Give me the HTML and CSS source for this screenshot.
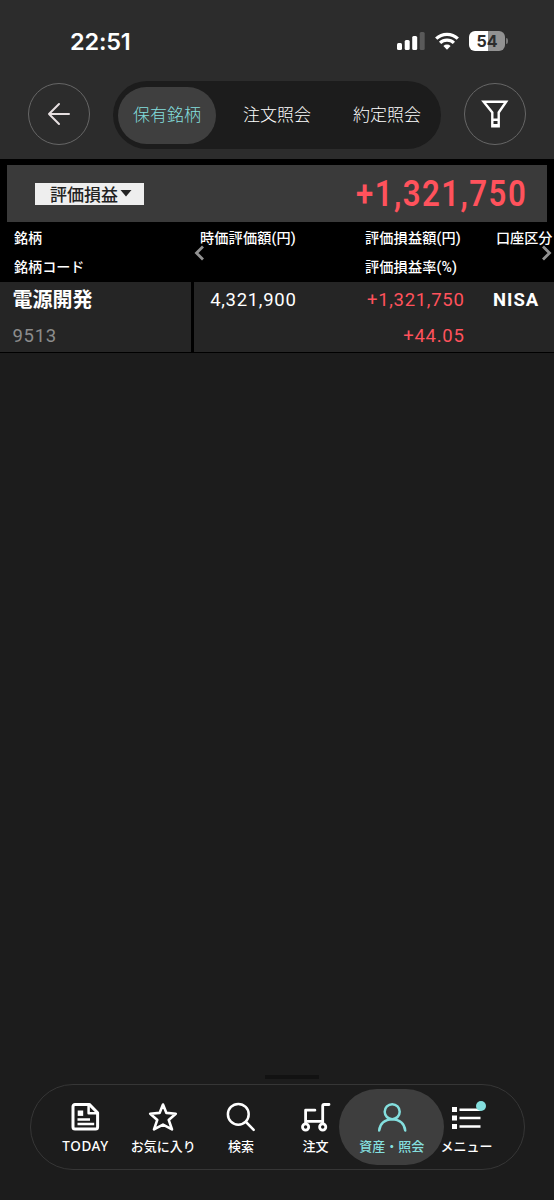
FILE: index.html
```
<!DOCTYPE html>
<html lang="ja">
<head>
    <meta charset="UTF-8">
    <meta name="viewport" content="width=device-width, initial-scale=1.0">
    <title>保有銘柄</title>
    <link rel="stylesheet" href="styles.css">
</head>
<body>

    <!-- Header -->
    <header class="header">
        <div class="status-bar">
            <span class="clock">22:51</span>
            <div class="status-icons">
                <svg class="signal" width="28" height="18" viewBox="0 0 28 18" fill="#fff">
                    <rect x="0" y="11" width="5" height="7" rx="1.5"/>
                    <rect x="7.7" y="8" width="5" height="10" rx="1.5"/>
                    <rect x="15.2" y="4" width="5" height="14" rx="1.5"/>
                    <rect x="22.7" y="0" width="5" height="18" rx="1.5" fill="#5a5a5a"/>
                </svg>
                <svg class="wifi" width="24" height="18" viewBox="0 0 24 18" fill="none" stroke="#fff" stroke-width="3.2">
                    <path d="M1.2 6.7a15.4 15.4 0 0 1 21.6 0"/>
                    <path d="M5.1 10.9a9.8 9.8 0 0 1 13.8 0"/>
                    <path d="M12 17.7l-3.6-3.6a5.1 5.1 0 0 1 7.2 0z" fill="#fff" stroke="none"/>
                </svg>
                <div class="battery">54</div>
            </div>
        </div>

        <div class="top-nav">
            <button class="round-button">
                <svg width="24" height="24" viewBox="0 0 24 24" fill="none" stroke="#e6dfe0" stroke-width="2" stroke-linecap="round" stroke-linejoin="round">
                    <path d="M22 12H2M12 2L2 12l10 10"/>
                </svg>
            </button>
            <div class="tabs">
                <button class="tab active">保有銘柄</button>
                <button class="tab">注文照会</button>
                <button class="tab">約定照会</button>
            </div>
            <button class="round-button">
                <svg width="28" height="28" viewBox="0 0 28 28" fill="none" stroke="#fff" stroke-width="2.4">
                    <path d="M2.6 1.7h22.6l-7.5 10.8v13.8h-6.4V12.5z"/>
                    <path d="M11.3 19.8h6.4M12 25.2h5"/>
                </svg>
            </button>
        </div>
    </header>

    <!-- Profit and loss summary -->
    <section class="summary">
        <button class="summary-select">評価損益<svg width="12" height="7" viewBox="0 0 12 7"><path d="M.5 0h11L6 6.5z" fill="#222"/></svg></button>
        <span class="summary-amount">+1,321,750</span>
    </section>

    <!-- Holdings -->
    <section class="holdings">
        <div class="grid-row grid-head">
            <div class="name"><p>銘柄</p><p>銘柄コード</p></div>
            <div class="value"><p>時価評価額(円)</p></div>
            <div class="profit"><p>評価損益額(円)</p><p>評価損益率(%)</p></div>
            <div class="account"><p>口座区分</p></div>
            <svg class="arrow arrow-left" width="11" height="16" viewBox="0 0 11 16"><path d="M9 1.5L2.5 8 9 14.5"/></svg>
            <svg class="arrow arrow-right" width="11" height="16" viewBox="0 0 11 16"><path d="M2 1.5L8.5 8 2 14.5"/></svg>
        </div>
        <div class="grid-row grid-body">
            <div class="name"><p class="stock">電源開発</p><p class="code">9513</p></div>
            <div class="value"><p>4,321,900</p></div>
            <div class="profit plus"><p>+1,321,750</p><p>+44.05</p></div>
            <div class="account"><p>NISA</p></div>
        </div>
    </section>

    <!-- Bottom menu -->
    <footer class="footer">
        <div class="handle"></div>
        <nav class="menu">
            <a class="menu-item">
                <svg width="30" height="30" viewBox="0 0 30 30" fill="none" stroke="#fff" stroke-width="3" stroke-linejoin="round">
                    <path d="M4 2.4h14.3l8.3 8.3v14.2a2 2 0 0 1-2 2H4a2 2 0 0 1-2-2V4.400a2 2 0 0 1 2-2z"/>
                    <path d="M17.6 2.8v8.4h8.500" stroke-width="2.5"/>
                    <path d="M6.700 8.500h5.500v5.400H6.700z" fill="#fff" stroke="none"/>
                    <path d="M6.500 17.500h12.500M6.500 22h16.700" stroke-width="2.300"/>
                </svg>
                <span class="latin">TODAY</span>
            </a>
            <a class="menu-item">
                <svg width="30" height="30" viewBox="0 0 30 30" fill="none" stroke="#fff" stroke-width="2.6" stroke-linejoin="round">
                    <path d="M15 2.5l3.4 8.400 9.400.8-7.100 6.200 3.300 9.500L15 22.600l-9 4.800 3.300-9.500-7.100-6.200 9.400-.8z"/>
                </svg>
                <span>お気に入り</span>
            </a>
            <a class="menu-item">
                <svg width="30" height="30" viewBox="0 0 30 30" fill="none" stroke="#fff" stroke-width="2.5" stroke-linecap="round">
                    <circle cx="12.3" cy="12.3" r="10.4"/>
                    <path d="M20 20l7.700 7.800"/>
                </svg>
                <span>検索</span>
            </a>
            <a class="menu-item">
                <svg width="30" height="30" viewBox="0 0 30 30" fill="none" stroke="#fff" stroke-width="2.8" stroke-linecap="round" stroke-linejoin="round">
                    <circle cx="4.6" cy="25" r="3.1"/>
                    <circle cx="21.700" cy="25" r="3.1"/>
                    <path d="M4.600 21.500V8.200h9.300M4.600 19.400h17.100M21.700 21.500V4a1.500 1.500 0 0 1 1.500-1.500H28"/>
                </svg>
                <span>注文</span>
            </a>
            <a class="menu-item active">
                <svg width="30" height="30" viewBox="0 0 30 30" fill="none" stroke="#84dfde" stroke-width="2.5" stroke-linecap="round">
                    <circle cx="15.2" cy="9.7" r="7.5"/>
                    <path d="M2.2 28.5c.5-6.5 5.5-11.3 13-11.3s12.500 4.800 13 11.300"/>
                </svg>
                <span>資産・照会</span>
            </a>
            <a class="menu-item">
                <svg width="30" height="30" viewBox="0 0 30 30" fill="#fff">
                    <path d="M1 5h5v5H1zM1 13.500h5v5H1zM1 22h5v5H1zM8.500 6.500h21v2.600h-21zM8.500 14.700h21v2.600h-21zM8.500 23.200h21v2.600h-21z"/>
                </svg>
                <i class="badge"></i>
                <span>メニュー</span>
            </a>
        </nav>
    </footer>

</body>
</html>
```
FILE: styles.css
```
* {
    box-sizing: border-box;
}

body {
    margin: 0;
    height: 1200px;
    display: flex;
    flex-direction: column;
    overflow: hidden;
    background-color: #1c1c1c;
    color: #fff;
    font-family: Roboto, "Noto Sans CJK JP", sans-serif;
}

p {
    margin: 0;
}

button {
    padding: 0;
    border: none;
    background: none;
    color: inherit;
    font-family: inherit;
}

/* Header */
.header {
    height: 159px;
    background-color: #2c2c2c;
}

.status-bar {
    height: 83px;
    display: flex;
    justify-content: space-between;
    padding: 27px 46px 0 70px;
}

.clock {
    font-family: Inter, sans-serif;
    font-size: 23.5px;
    font-weight: 600;
    line-height: 30px;
    letter-spacing: -0.2px;
}

.status-icons {
    display: flex;
    align-items: flex-start;
    padding-top: 5px;
}

.wifi {
    margin-left: 10px;
}

.battery {
    position: relative;
    width: 36px;
    height: 20px;
    margin: -1px 3px 0 10px;
    border-radius: 6px;
    background: linear-gradient(to right, #fff 54%, #929292 54%);
    color: #2c2c2c;
    font-family: Inter, sans-serif;
    font-size: 16px;
    font-weight: 700;
    line-height: 20px;
    text-align: center;
}

.battery::after {
    content: "";
    position: absolute;
    right: -3px;
    top: 7px;
    width: 2px;
    height: 6px;
    border-radius: 0 3px 3px 0;
    background-color: #777;
}

.top-nav {
    display: flex;
    align-items: center;
    justify-content: space-between;
    height: 62px;
    padding: 0 28px;
}

.round-button {
    width: 62px;
    height: 62px;
    border: 1px solid #666;
    border-radius: 50%;
    display: flex;
    align-items: center;
    justify-content: center;
}

.tabs {
    display: flex;
    align-items: center;
    gap: 12px;
    width: 328px;
    height: 68px;
    margin-top: 2px;
    padding: 0 5px;
    border-radius: 34px;
    background-color: #1c1c1c;
}

.tab {
    width: 98px;
    height: 57px;
    padding-bottom: 4px;
    border-radius: 29px;
    font-family: "Noto Sans CJK JP", sans-serif;
    font-size: 17px;
    font-weight: 300;
}

.tab.active {
    background-color: #3f3f3f;
    color: #84dfde;
}

/* Profit and loss summary */
.summary {
    display: flex;
    align-items: center;
    justify-content: space-between;
    height: 63px;
    padding: 0 20px 0 28px;
    border: solid #000;
    border-width: 6px 7px 0;
    background-color: #3a3a3a;
}

.summary-select {
    display: flex;
    align-items: center;
    width: 109px;
    height: 22px;
    padding-left: 15px;
    gap: 2px;
    background-color: #eee;
    color: #222;
    font-family: "Noto Sans CJK JP", sans-serif;
    font-size: 17px;
    font-weight: 500;
    line-height: 20px;
}

.summary-amount {
    color: #ff525c;
    font-size: 36.5px;
    font-weight: 600;
    letter-spacing: 1.7px;
    transform: scaleX(0.855);
    transform-origin: right;
}

/* Holdings */
.grid-row {
    position: relative;
    display: grid;
    grid-template-columns: 194px 118px 166px 76px;
}

.grid-head {
    height: 60px;
    padding-top: 2px;
    background-color: #000;
    font-size: 14.1px;
    font-weight: 500;
    line-height: 29px;
    letter-spacing: 0.2px;
    white-space: nowrap;
}

.grid-head .name {
    padding-left: 14px;
    letter-spacing: 0;
}

.grid-head .value {
    padding-left: 6px;
}

.grid-head .profit {
    padding-left: 53px;
}

.grid-head .account {
    padding-left: 18px;
    letter-spacing: 0;
}

.arrow {
    position: absolute;
    top: 23px;
    fill: none;
    stroke: #929292;
    stroke-width: 2.8;
}

.arrow-left {
    left: 194px;
}

.arrow-right {
    right: 2px;
}

.grid-body {
    height: 71px;
    border-bottom: 1px solid #000;
    background-color: #252525;
    font-size: 18.5px;
    line-height: 36px;
    letter-spacing: 0.7px;
}

.grid-body .name {
    height: 70px;
    padding-left: 12.5px;
    border-right: 3px solid #000;
}

.grid-body .value {
    padding-right: 15.5px;
    text-align: right;
}

.grid-body .profit {
    padding-right: 13.5px;
    text-align: right;
}

.grid-body .account {
    padding-left: 15px;
    font-weight: 700;
    letter-spacing: 1px;
}

.stock {
    font-size: 20px;
    font-weight: 700;
    letter-spacing: 0;
}

.code {
    color: #8c8c8c;
}

.plus {
    color: #ff525c;
}

/* Bottom menu */
.footer {
    margin-top: auto;
    height: 125px;
}

.handle {
    width: 54px;
    height: 4px;
    margin: 0 auto 5px 265px;
    background-color: #121212;
}

.menu {
    display: grid;
    grid-template-columns: repeat(6, 76.2px);
    justify-content: center;
    width: 495px;
    height: 86px;
    margin-left: 29.5px;
    border: 1px solid #363636;
    border-radius: 43px;
}

.menu-item {
    position: relative;
    display: flex;
    flex-direction: column;
    align-items: center;
    padding: 17px 0 0 1px;
    font-family: "Noto Sans CJK JP", sans-serif;
    font-size: 13px;
    font-weight: 500;
    line-height: 28px;
    white-space: nowrap;
}

.menu-item:first-child,
.menu-item:last-child {
    padding-left: 0;
    padding-right: 2px;
}

.menu-item:nth-child(3) {
    padding-left: 4px;
}

.latin {
    font-family: "Noto Sans", sans-serif;
    font-size: 13.5px;
    letter-spacing: 0.6px;
}

.menu-item.active {
    color: #84dfde;
}

.menu-item.active::before {
    content: "";
    position: absolute;
    z-index: -1;
    top: 4px;
    left: -14px;
    width: 105px;
    height: 76px;
    border-radius: 38px;
    background-color: #3e3e3e;
}

.badge {
    position: absolute;
    top: 16px;
    right: 19.5px;
    width: 10px;
    height: 10px;
    border-radius: 50%;
    background-color: #84dfde;
}
```
